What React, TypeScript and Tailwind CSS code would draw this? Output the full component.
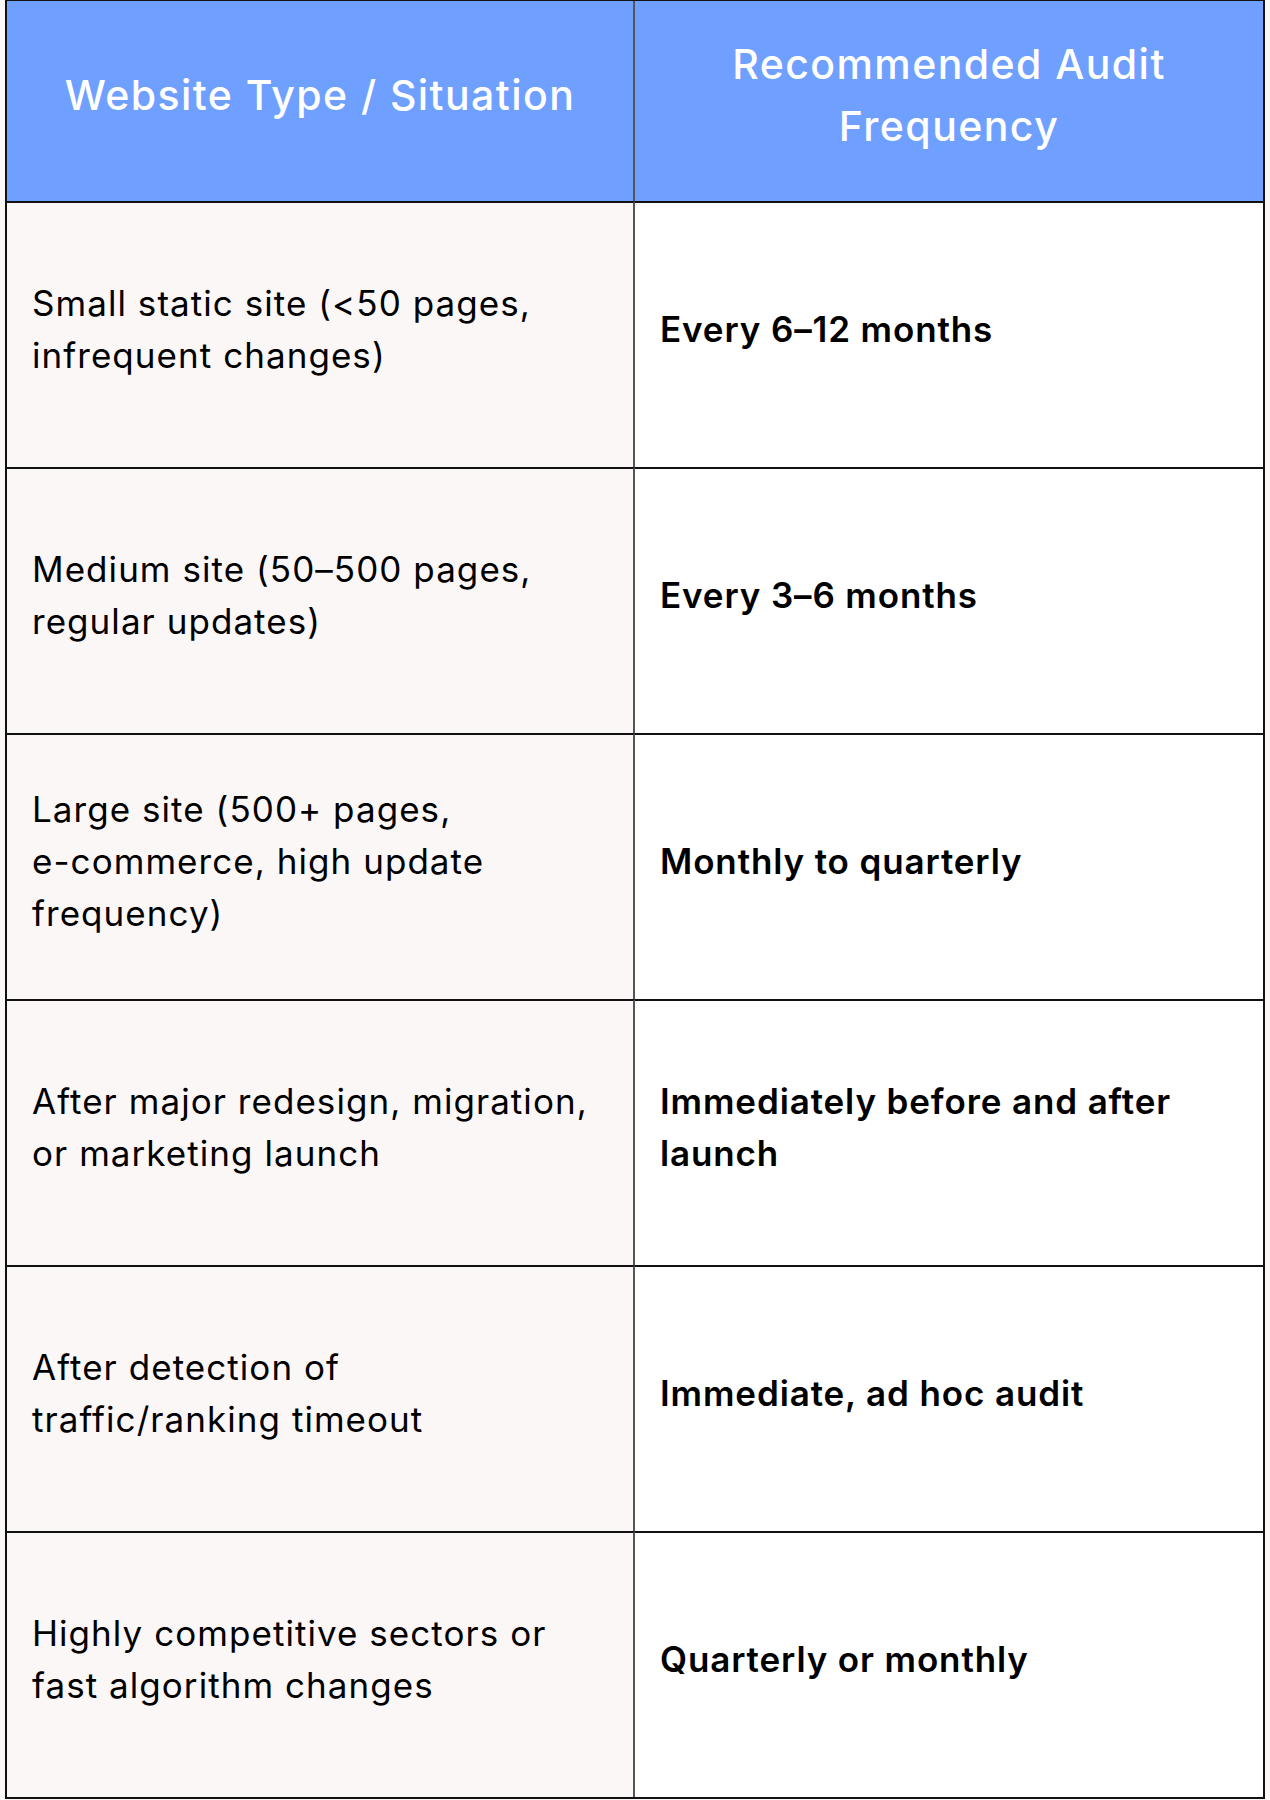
import React from "react";

const rows: { situation: string[]; frequency: string[] }[] = [
  { situation: ["Small static site (<50 pages,", "infrequent changes)"], frequency: ["Every 6–12 months"] },
  { situation: ["Medium site (50–500 pages,", "regular updates)"], frequency: ["Every 3–6 months"] },
  {
    situation: ["Large site (500+ pages,", "e-commerce, high update", "frequency)"],
    frequency: ["Monthly to quarterly"],
  },
  {
    situation: ["After major redesign, migration,", "or marketing launch"],
    frequency: ["Immediately before and after", "launch"],
  },
  { situation: ["After detection of", "traffic/ranking timeout"], frequency: ["Immediate, ad hoc audit"] },
  {
    situation: ["Highly competitive sectors or", "fast algorithm changes"],
    frequency: ["Quarterly or monthly"],
  },
];

const Lines = ({ lines }: { lines: string[] }) => (
  <div>
    {lines.map((l, i) => (
      <div key={i} className="whitespace-nowrap">
        {l}
      </div>
    ))}
  </div>
);

const App = () => {
  return (
    <div className="min-h-[1800px] bg-[#fcf7f7] pl-[5px] pr-[5px] font-['Inter',sans-serif]">
      <div className="w-[1260px] border-2 border-t-[1px] border-[#111] grid grid-cols-2">
        {/* header */}
        <div className="h-[200px] bg-[#70a0ff] border-r-2 border-[#555] flex items-center justify-center pb-[12px] text-center text-white text-[41px] leading-[62px] font-medium tracking-[0.035em]">
          Website Type / Situation
        </div>
        <div className="h-[200px] bg-[#70a0ff] flex items-center justify-center pb-[12px] text-center text-white text-[41px] leading-[62px] font-medium tracking-[0.035em]">
          <Lines lines={["Recommended Audit", "Frequency"]} />
        </div>

        {rows.map((row, i) => (
          <React.Fragment key={i}>
            <div className="h-[266px] bg-[#fcf7f7] border-t-2 border-r-2 border-t-[#111] border-r-[#555] flex items-center pl-[25px] pb-[12px] text-[35px] leading-[52px] tracking-[0.03em] text-black">
              <Lines lines={row.situation} />
            </div>
            <div className="h-[266px] bg-white border-t-2 border-[#111] flex items-center pl-[25px] pb-[12px] text-[35px] leading-[52px] font-semibold tracking-[0.025em] text-black">
              <Lines lines={row.frequency} />
            </div>
          </React.Fragment>
        ))}
      </div>
    </div>
  );
};

export default App;
